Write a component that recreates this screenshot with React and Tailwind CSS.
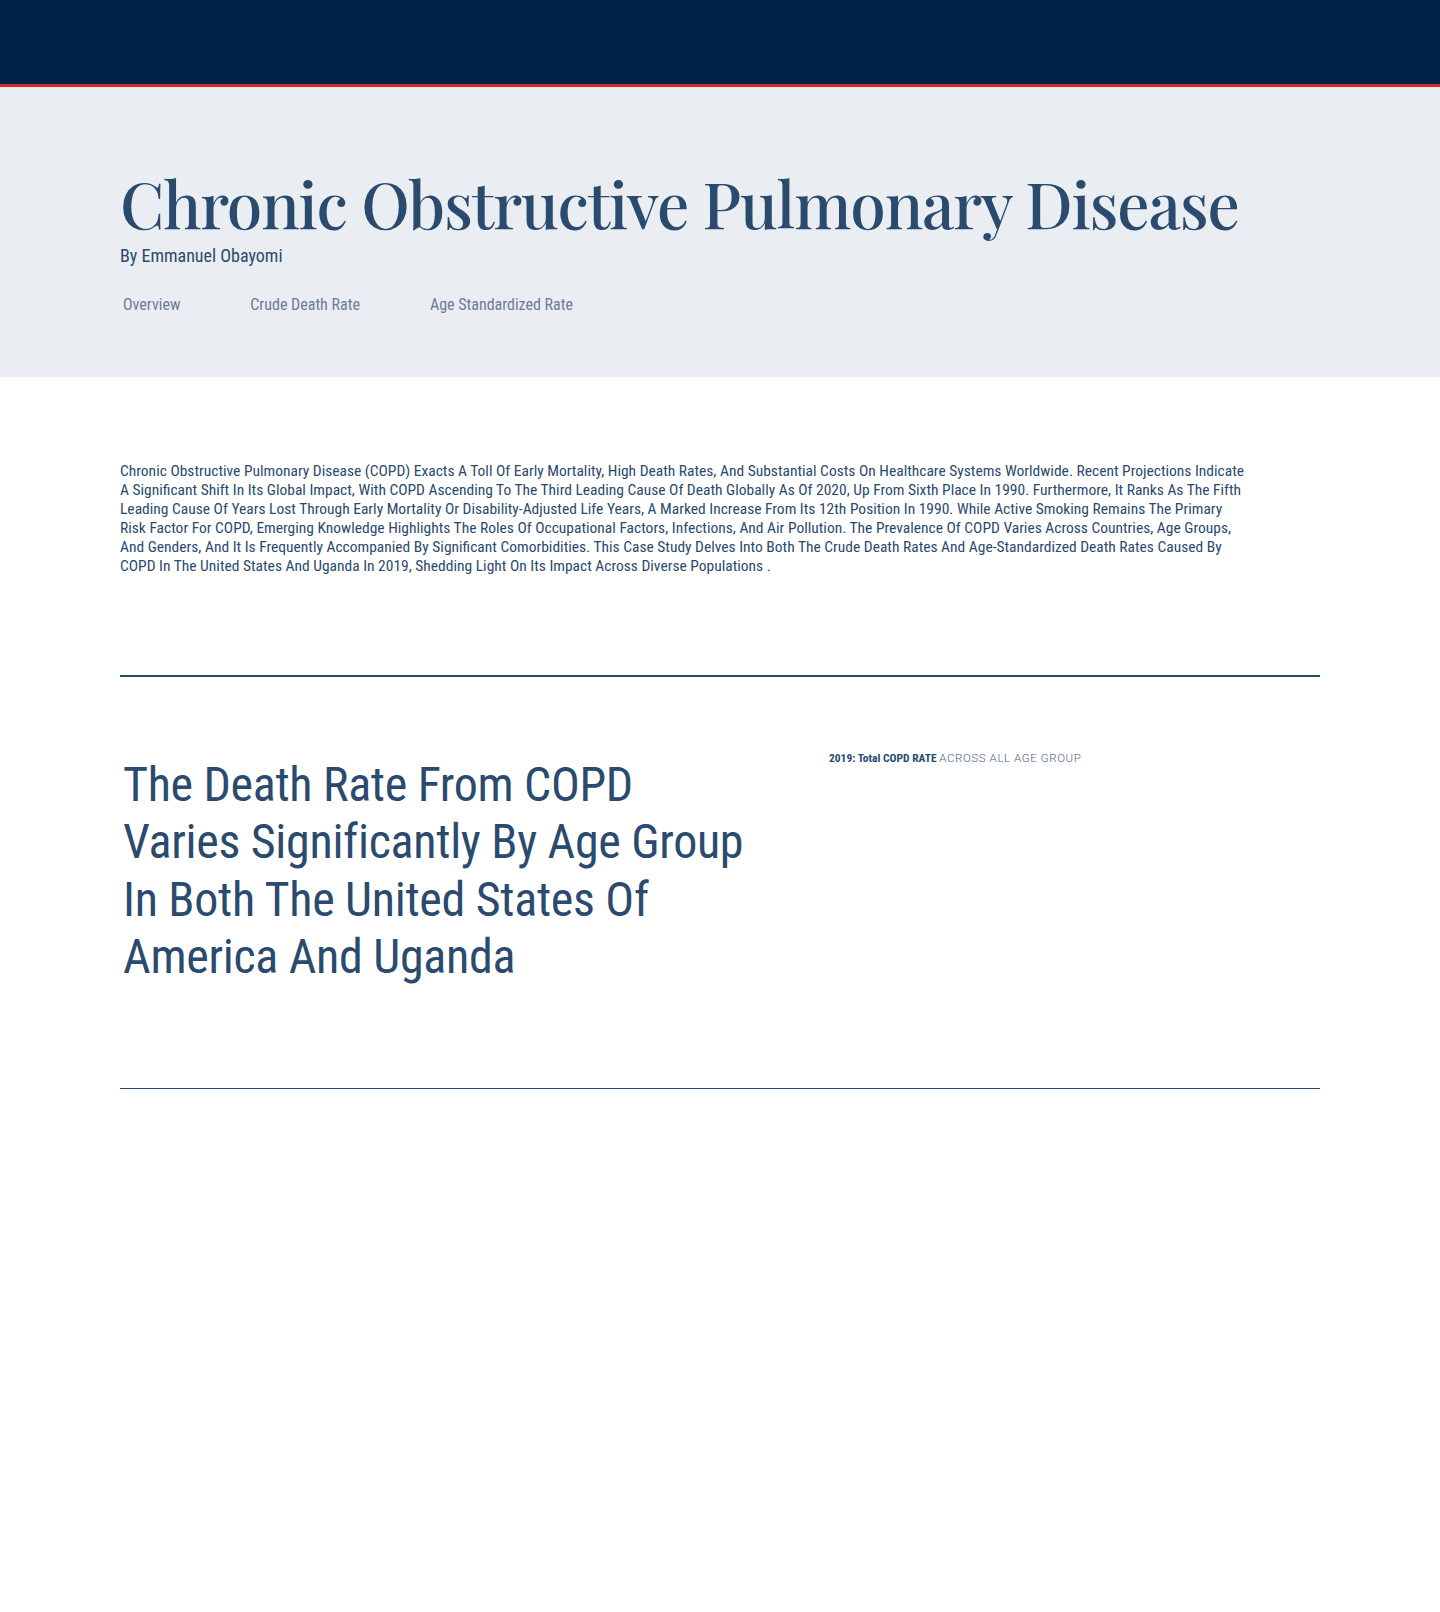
import React from 'react';

const roboto = { fontFamily: 'Roboto, "DejaVu Sans Condensed", sans-serif' };

const navLinks = ['Overview', 'Crude Death Rate', 'Age Standardized Rate'];

function App() {
  return (
    <div className="min-h-screen bg-white font-stretch-condensed" style={roboto}>
      {/* Top bar */}
      <header className="h-[87px] bg-[#00214a] border-b-[3px] border-[#d42a2a]"></header>

      {/* Hero */}
      <section className="bg-[#eaedf2] h-[290px]">
        <div className="max-w-[1200px] mx-auto pt-[84px]">
          <h1
            className="text-[64px] leading-none font-medium tracking-[-1.15px] text-[#2a4a6e] whitespace-nowrap font-stretch-normal"
            style={{ fontFamily: '"Playfair Display", "Liberation Serif", serif' }}
          >
            Chronic Obstructive Pulmonary Disease
          </h1>
          <p className="mt-[9px] text-[18px] leading-[24px] text-[#2a4a6e]">By Emmanuel Obayomi</p>
          <nav className="mt-[25px] flex gap-[70px] pl-[3px]">
            {navLinks.map((link) => (
              <a key={link} href="#" className="text-[16px] text-[#6b7c99]">
                {link}
              </a>
            ))}
          </nav>
        </div>
      </section>

      {/* Intro */}
      <main className="max-w-[1200px] mx-auto">
        <p className="pt-[85px] max-w-[1130px] text-[15.5px] leading-[19px] text-[#2a4a6e]">
          Chronic Obstructive Pulmonary Disease (COPD) Exacts A Toll Of Early Mortality, High Death Rates, And Substantial Costs On Healthcare Systems Worldwide. Recent Projections Indicate A Significant Shift In Its Global Impact, With COPD Ascending To The Third Leading Cause Of Death Globally As Of 2020, Up From Sixth Place In 1990. Furthermore, It Ranks As The Fifth Leading Cause Of Years Lost Through Early Mortality Or Disability-Adjusted Life Years, A Marked Increase From Its 12th Position In 1990. While Active Smoking Remains The Primary Risk Factor For COPD, Emerging Knowledge Highlights The Roles Of Occupational Factors, Infections, And Air Pollution. The Prevalence Of COPD Varies Across Countries, Age Groups, And Genders, And It Is Frequently Accompanied By Significant Comorbidities. This Case Study Delves Into Both The Crude Death Rates And Age-Standardized Death Rates Caused By COPD In The United States And Uganda In 2019, Shedding Light On Its Impact Across Diverse Populations .
        </p>

        <div className="mt-[99px] h-[1.5px] bg-[#2a4a6e]"></div>

        {/* Age group section */}
        <section className="grid grid-cols-[709px_1fr] h-[411px]">
          <h2 className="pt-[79px] pl-[3px] max-w-[640px] text-[48px] leading-[57.5px] tracking-[-0.3px] text-[#2a4a6e]">
            The Death Rate From COPD Varies Significantly By Age Group In Both The United States Of America And Uganda
          </h2>
          <div className="pt-[73px]">
            <p className="text-[11.5px] text-[#2a4a6e]">
              <span className="font-bold">2019: Total COPD RATE</span>{' '}
              <span className="font-light tracking-[0.6px] text-[#4d6285] font-stretch-normal">ACROSS ALL AGE GROUP</span>
            </p>
          </div>
        </section>

        <div className="h-[1.5px] bg-[#2a4a6e]"></div>
        <div className="h-[524px]"></div>
      </main>
    </div>
  );
}

export default App;
